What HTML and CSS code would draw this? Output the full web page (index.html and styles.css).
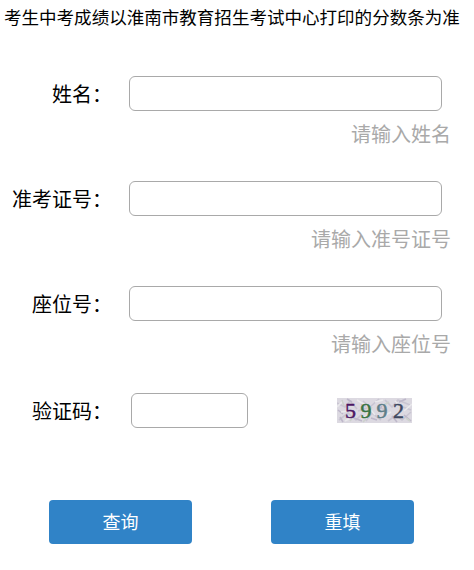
FILE: index.html
```html
<!DOCTYPE html>
<html lang="zh-CN">

<head>
    <meta charset="UTF-8">
    <meta name="viewport" content="width=device-width, initial-scale=1.0">
    <title>中考成绩查询</title>

    <link rel="stylesheet" href="styles.css">
</head>

<body>
    <p class="notice">考生中考成绩以淮南市教育招生考试中心打印的分数条为准</p>
    <form id="queryForm" action="#" method="post" class="form">
        <div class="row">
            <label for="name">姓名：</label>
            <input type="text" id="name" name="name" class="input">
        </div>
        <p class="tip">请输入姓名</p>

        <div class="row">
            <label for="ticket">准考证号：</label>
            <input type="text" id="ticket" name="ticket" class="input">
        </div>
        <p class="tip">请输入准号证号</p>

        <div class="row">
            <label for="seat">座位号：</label>
            <input type="text" id="seat" name="seat" class="input">
        </div>
        <p class="tip">请输入座位号</p>

        <div class="row code-row">
            <label for="code">验证码：</label>
            <input type="text" id="code" name="code" class="input code-input">
            <svg class="captcha" width="75" height="25" viewBox="0 0 75 25">
                <rect width="75" height="25" fill="#dcd9e1" />
                <g class="noise">
                    <path stroke="#c3bfce" d="M0 5l8 4 5-6 7 8M2 22l9-7 8 7 6-6M26 3l7 6 9-8M29 23l6-8 9 7M48 2l7 7 6-7 12 5M51 23l8-6 6 5 9-8M21 13l9-3M42 9l8 4M66 9l8 3" />
                    <path stroke="#b5adc3" d="M1 12l5 4M10 1l5 3M17 20l8 3M24 6l5 2M34 20l6 2M41 13l4-5M55 18l5 6M62 4l7-3M67 17l7 6M3 19l3 5" />
                    <path stroke="#efeff0" d="M0 9l6-6M8 23l11-6M20 2l8 5M24 20l7-3M38 4l8-2M45 19l9-5M58 3l5 5M67 13l8-7M4 14l6-1M34 12l4 5" />
                    <path stroke="#c7cfc4" d="M5 2l2 6M13 23l3-4M31 14l4-5M47 7l5-3M69 20l4 3M26 24l3-3" />
                </g>
                <g class="digits">
                    <text x="8" y="19.5" fill="#4c1763" stroke="#4c1763">5</text>
                    <text x="23.5" y="19.5" fill="#397442" stroke="#397442">9</text>
                    <text x="39.5" y="19.5" fill="#5e7e88" stroke="#5e7e88">9</text>
                    <text x="56" y="19.5" fill="#3e4760" stroke="#3e4760">2</text>
                </g>
            </svg>
        </div>

        <div class="buttons">
            <button type="submit" class="btn">查询</button>
            <button type="reset" class="btn">重填</button>
        </div>
    </form>
</body>

</html>
```
FILE: styles.css
```css
* {
    padding: 0;
    margin: 0;
    box-sizing: border-box;
}

body {
    background-color: #fff;
    color: #000;
    font-family: 'Noto Sans CJK SC', sans-serif;
    overflow: hidden;
}

.notice {
    height: 36px;
    padding-left: 4px;
    font-size: 17.55px;
    line-height: 34px;
    white-space: nowrap;
}

.form {
    width: 451px;
    padding-top: 40px;
    font-size: 20px;
}

.row {
    display: flex;
    align-items: center;
    height: 35px;
}

.row label {
    width: 112px;
    margin-right: 17px;
    text-align: right;
    white-space: nowrap;
}

.input {
    width: 313px;
    height: 35px;
    padding: 0 8px;
    border: 1px solid #a9a9a9;
    border-radius: 6px;
    outline: 0;
    background-color: #fff;
    font: inherit;
}

.tip {
    height: 70px;
    line-height: 46px;
    color: #a9a9a9;
    text-align: right;
}

.code-row {
    margin-top: 2px;
}

.code-input {
    width: 117px;
    margin-left: 2px;
}

.captcha {
    margin-left: 89px;
}

.noise {
    fill: none;
    stroke-width: 1.6;
    opacity: 0.75;
}

.digits {
    font-family: 'Liberation Serif', serif;
    font-size: 22px;
    stroke-width: 0.5;
}

.buttons {
    display: flex;
    gap: 79px;
    padding: 72px 0 0 49px;
}

.btn {
    width: 143px;
    height: 44px;
    padding-bottom: 3px;
    border: none;
    border-radius: 4px;
    background-color: #3083c7;
    color: #fff;
    font: inherit;
    font-size: 18px;
    cursor: pointer;
}
```
